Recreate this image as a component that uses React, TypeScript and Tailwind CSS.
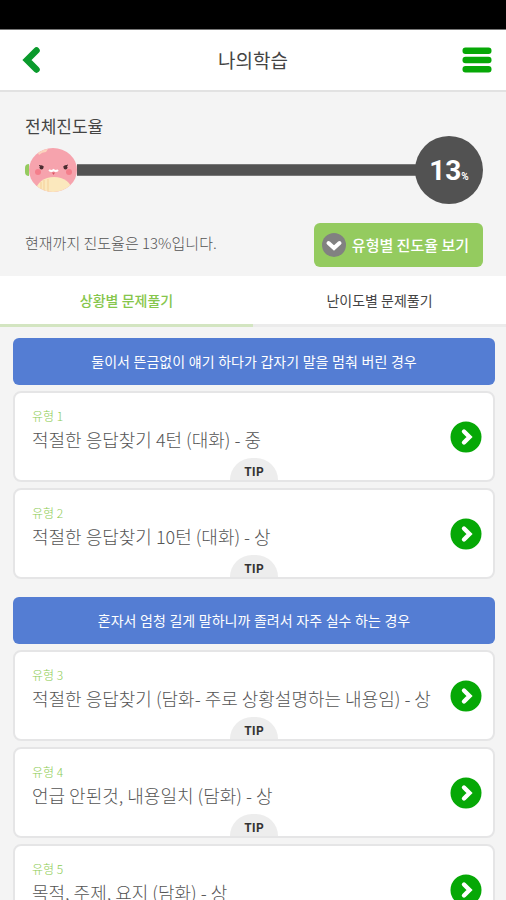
import { useState } from 'react';

interface Lesson {
  id: number;
  title: string;
  tip: boolean;
}

interface LessonGroup {
  heading: string;
  lessons: Lesson[];
}

const progress = 13;

const tabs = ['상황별 문제풀기', '난이도별 문제풀기'];

const groups: LessonGroup[] = [
  {
    heading: '둘이서 뜬금없이 얘기 하다가 갑자기 말을 멈춰 버린 경우',
    lessons: [
      { id: 1, title: '적절한 응답찾기 4턴 (대화) - 중', tip: true },
      { id: 2, title: '적절한 응답찾기 10턴 (대화) - 상', tip: true },
    ],
  },
  {
    heading: '혼자서 엄청 길게 말하니까 졸려서 자주 실수 하는 경우',
    lessons: [
      { id: 3, title: '적절한 응답찾기 (담화- 주로 상황설명하는 내용임) - 상', tip: true },
      { id: 4, title: '언급 안된것, 내용일치 (담화) - 상', tip: true },
      { id: 5, title: '목적, 주제, 요지 (담화) - 상', tip: true },
    ],
  },
];

function Mascot() {
  return (
    <svg viewBox="0 0 50 44" className="h-11 w-[50px]" aria-hidden="true">
      <defs>
        <clipPath id="body">
          <ellipse cx="25" cy="22" rx="24" ry="22" />
        </clipPath>
      </defs>
      <g clipPath="url(#body)">
        <rect width="50" height="44" fill="#f6a3ad" />
        <path d="M10 5 Q14 1 20 1 L18 4 Q14 4 11 7Z" fill="#fbd3bd" />
        <ellipse cx="26" cy="43" rx="18" ry="14" fill="#fbe8bd" />
        <path d="M13 34v10M16 32v12M20 31v13" stroke="#f5cf98" strokeWidth="1" />
      </g>
      <circle cx="10" cy="24" r="3" fill="#f47e8b" />
      <circle cx="41" cy="24" r="3" fill="#f47e8b" />
      <circle cx="13.5" cy="19.5" r="2" fill="#4a2c30" />
      <circle cx="37.5" cy="19.5" r="2" fill="#4a2c30" />
      <path d="M11 17.5l4.5 1M40 17l-4.5 1.5" stroke="#4a2c30" strokeWidth="1" />
      <path d="M21 22q2.5 2 4.500 0q2.500 2 4.500 0" stroke="#fff" strokeWidth="2" fill="none" />
      <path d="M24 24.500h3l-1.500 2.500z" fill="#d9515f" />
    </svg>
  );
}

function LessonCard({ lesson }: { lesson: Lesson }) {
  return (
    <li className="relative flex h-[91px] items-center justify-between overflow-hidden rounded-lg border-2 border-[#e5e5e6] bg-white pr-[11px] pl-[17px]">
      <div className="min-w-0 pb-3">
        <p className="text-xs leading-4 font-light text-[#8ccb52]">유형 {lesson.id}</p>
        <h3 className="text-lg leading-[30px] font-light text-[#555]">{lesson.title}</h3>
      </div>
      <button type="button" aria-label={lesson.title} className="shrink-0">
        <svg viewBox="0 0 32 32" className="size-8">
          <circle cx="16" cy="16" r="15.5" fill="#06a806" />
          <path
            d="M14 10.5l5.5 5.500l-5.500 5.500"
            fill="none"
            stroke="#fff"
            strokeWidth="4.4"
            strokeLinecap="round"
            strokeLinejoin="miter"
          />
        </svg>
      </button>
      {lesson.tip && (
        <button
          type="button"
          className="absolute bottom-0 left-1/2 h-[22px] w-12 -translate-x-1/2 rounded-t-full bg-[#ededed] pt-1 text-xs leading-4 font-bold text-[#333]"
        >
          TIP
        </button>
      )}
    </li>
  );
}

export default function App() {
  const [activeTab, setActiveTab] = useState(0);

  return (
    <div className="flex h-screen flex-col overflow-hidden bg-[#f4f4f4] font-['Noto_Sans_CJK_KR',sans-serif]">
      <div className="h-[30px] shrink-0 border-b border-[#777] bg-black" />

      <header className="flex h-[62px] shrink-0 items-center justify-between border-b-2 border-[#e2e2e2] bg-white pr-[14px] pl-5">
        <button type="button" aria-label="뒤로">
          <svg viewBox="0 0 24 30" className="h-[30px] w-6">
            <path
              d="M16.5 5.5L7 15l9.5 9.5"
              fill="none"
              stroke="#0a9a2c"
              strokeWidth="6.5"
              strokeLinecap="round"
              strokeLinejoin="miter"
            />
          </svg>
        </button>
        <h1 className="text-[19px] leading-7 text-[#444]">나의학습</h1>
        <button type="button" aria-label="메뉴">
          <svg viewBox="0 0 30 26" className="h-[26px] w-[30px]" fill="#06a806">
            <rect x="0.5" y="0.5" width="29" height="6.5" rx="3" />
            <rect x="0.5" y="9.75" width="29" height="6.5" rx="3" />
            <rect x="0.5" y="19" width="29" height="6.5" rx="3" />
          </svg>
        </button>
      </header>

      <main className="flex-1 overflow-y-auto [scrollbar-width:none]">
        <section className="pt-5 pr-[23px] pb-[9px] pl-[25px]">
          <h2 className="text-[17px] leading-7 text-[#444]">전체진도율</h2>
          <div className="-mt-[5px] flex h-[70px] items-center">
            <div className="h-3 w-1 shrink-0 rounded-l-sm bg-[#94cb5f]" />
            <div className="-mx-px shrink-0">
              <Mascot />
            </div>
            <div className="h-3 flex-1 border-y border-[#777] bg-[#525252]" />
            <div className="-ml-1 flex size-[68px] shrink-0 items-center justify-center rounded-full bg-[#525252] font-bold text-white">
              <span className="flex items-baseline pt-0.5 font-['Roboto','Noto_Sans',sans-serif] text-[28px] leading-8">
                {progress}
                <span className="text-[10px] leading-4">%</span>
              </span>
            </div>
          </div>
          <div className="mt-[18px] flex items-center justify-between">
            <p className="pb-1 text-[15px] leading-6 font-light text-[#555]">
              현재까지 진도율은 {progress}%입니다.
            </p>
            <button
              type="button"
              className="flex h-11 items-center gap-1.5 rounded-md bg-[#94cb5f] pr-[14px] pl-2 text-[15px] font-medium text-white"
            >
              <svg viewBox="0 0 24 24" className="size-6">
                <circle cx="12" cy="12" r="12" fill="#818181" />
                <path
                  d="M6.5 10l5.5 5l5.5-5"
                  fill="none"
                  stroke="#fff"
                  strokeWidth="4"
                  strokeLinecap="round"
                />
              </svg>
              유형별 진도율 보기
            </button>
          </div>
        </section>

        <nav role="tablist" className="grid grid-cols-2 bg-white">
          {tabs.map((tab, idx) => (
            <button
              key={tab}
              type="button"
              role="tab"
              aria-selected={idx === activeTab}
              onClick={() => setActiveTab(idx)}
              className={`h-[51px] border-b-3 text-sm ${
                idx === activeTab
                  ? 'border-[#d3e5c1] font-medium text-[#86c64c]'
                  : 'border-[#ebebeb] text-[#444]'
              }`}
            >
              {tab}
            </button>
          ))}
        </nav>

        <div className="space-y-[18px] pt-[11px] pr-[11px] pl-[13px]">
          {groups.map((group) => (
            <section key={group.heading}>
              <h2 className="rounded-md bg-[#547dd3] px-3 py-3 text-center font-['Noto_Sans','Noto_Sans_CJK_KR',sans-serif] text-sm leading-[23px] text-white">
                {group.heading}
              </h2>
              <ul className="mt-1.5 space-y-1.5">
                {group.lessons.map((lesson) => (
                  <LessonCard key={lesson.id} lesson={lesson} />
                ))}
              </ul>
            </section>
          ))}
        </div>
      </main>
    </div>
  );
}
